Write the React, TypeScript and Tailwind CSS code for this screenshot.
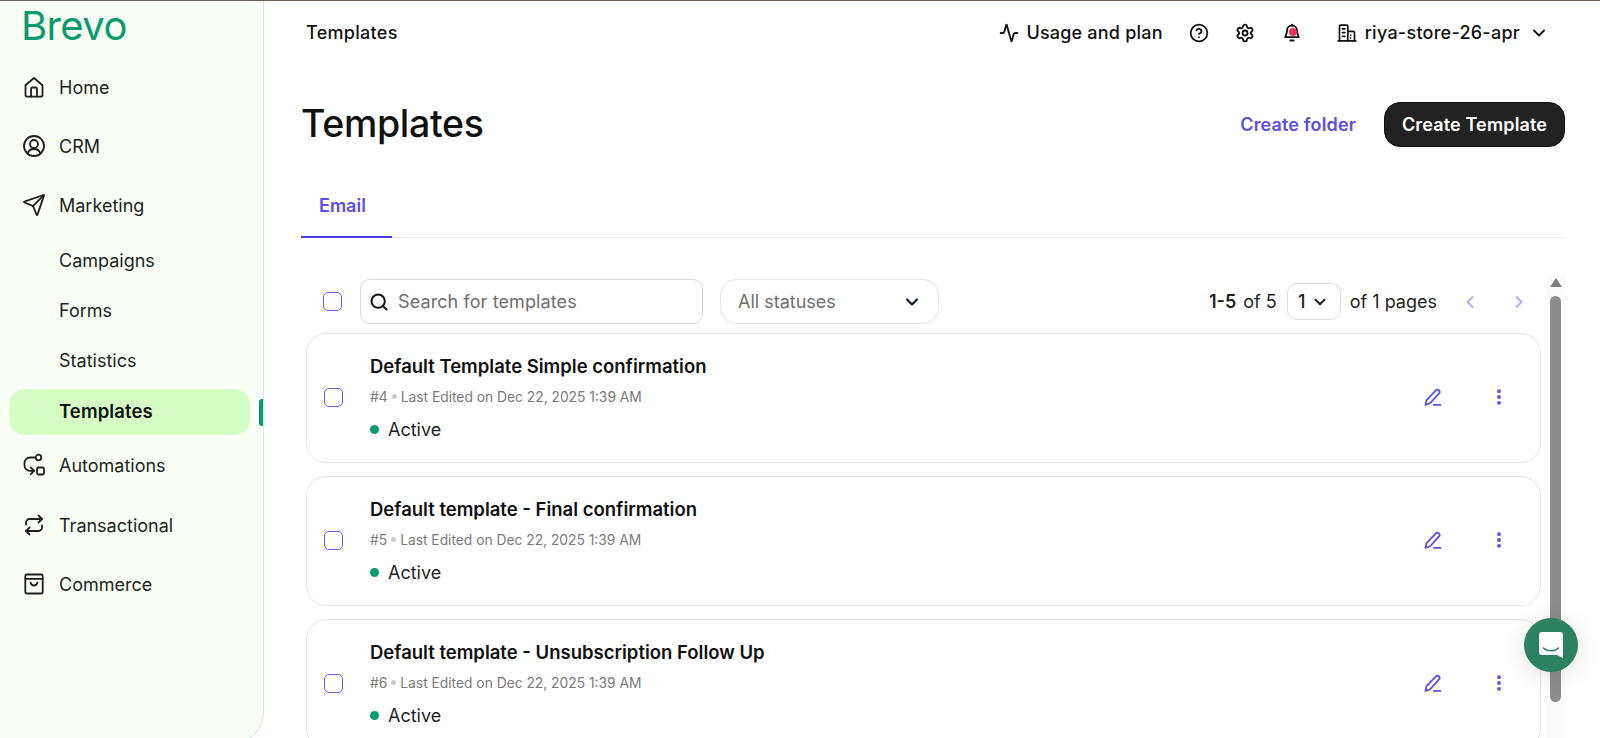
import React from "react";
import { Activity, ChevronDown, ChevronLeft, ChevronRight, CircleHelp, EllipsisVertical, Search, Send, Settings } from "lucide-react";

const Ic = ({ children, size = 24, sw = 1.8 }: { children: React.ReactNode; size?: number; sw?: number }) => (
  <svg width={size} height={size} viewBox="0 0 24 24" fill="none" stroke="currentColor" strokeWidth={sw} strokeLinecap="round" strokeLinejoin="round" className="shrink-0">
    {children}
  </svg>
);

const HomeIcon = () => (
  <Ic>
    <path d="M3.5 10.2 12 3l8.5 7.2V20a1.6 1.6 0 0 1-1.6 1.6H5.1A1.6 1.6 0 0 1 3.5 20Z" />
    <path d="M9 21.5V14a1.5 1.5 0 0 1 1.5-1.5h3A1.5 1.5 0 0 1 15 14v7.5" />
  </Ic>
);
const CrmIcon = () => (
  <Ic>
    <circle cx="12" cy="12" r="10" />
    <circle cx="12" cy="10" r="4" />
    <path d="M5.5 19.5C6.5 16.5 9 15 12 15s5.500 1.500 6.500 4.500" />
  </Ic>
);
const AutoIcon = () => (
  <Ic>
    <circle cx="16.500" cy="4.500" r="2.800" />
    <rect x="15" y="14.500" width="7" height="7" rx="1.500" />
    <path d="M12.500 4.500H8A5.500 5.500 0 0 0 2.500 10v2A5.500 5.500 0 0 0 8 17.800h4" />
    <path d="m8.800 14.500 3.400 3.300-3.400 3.400" />
  </Ic>
);
const TransIcon = () => (
  <Ic>
    <path d="M4 11.500V9.500A3.500 3.500 0 0 1 7.500 6H20" />
    <path d="m16.500 2.500 3.500 3.500-3.500 3.500" />
    <path d="M20 12.500v2a3.500 3.500 0 0 1-3.500 3.500H4" />
    <path d="m7.500 14.500-3.500 3.500 3.500 3.500" />
  </Ic>
);
const BagIcon = () => (
  <Ic>
    <path d="M4.800 2.500h14.400a1.500 1.500 0 0 1 1.500 1.500v16a1.500 1.500 0 0 1-1.500 1.500H4.800A1.500 1.500 0 0 1 3.300 20V4a1.500 1.500 0 0 1 1.500-1.500Z" />
    <path d="M3.500 6.800h17" />
    <path d="M8.500 10.500c.5 2 1.700 3 3.500 3s3-1 3.500-3" />
  </Ic>
);
const PenIcon = () => (
  <Ic size={20} sw={2.200}>
    <path d="M3 21.500 4.200 15.800 15.500 4a2.600 2.600 0 0 1 3.700 3.700L8.500 19.500 3 21.500Z" />
    <path d="M13 21.500h8" />
  </Ic>
);
const BuildingIcon = () => (
  <Ic size={20} sw={2}>
    <path d="M3 21.500V4a1.500 1.500 0 0 1 1.500-1.500h7A1.500 1.500 0 0 1 13 4v17.500" />
    <path d="M13 10h6.500A1.500 1.500 0 0 1 21 11.500v10" />
    <path d="M1.500 21.500h21M6.500 7h3M6.500 11.500h3M6.500 16h3M16.500 14.500v.01M16.500 18v.01" />
  </Ic>
);

const NavItem = ({ icon, label, h = "h-[59.500px]" }: { icon: React.ReactNode; label: string; h?: string }) => (
  <div className={`flex ${h} items-center gap-[13px] pl-[22px] text-[18px] text-[#1f1f1f]`}>
    {icon}
    <span className="mt-[1px]">{label}</span>
  </div>
);

const SubItem = ({ label }: { label: string }) => (
  <div className="flex h-[50px] items-center pl-[59px] text-[18px] text-[#1f1f1f]">{label}</div>
);

const Card = ({ title, id }: { title: string; id: string }) => (
  <div className="flex h-[130px] w-[1235px] shrink-0 items-center rounded-[20px] border border-[#e5e5e5] bg-white">
    <div className="mb-[2px] ml-[17px] h-[19px] w-[19px] shrink-0 rounded-[5px] border border-[#6a5ef0]" />
    <div className="mb-[1px] ml-[27px] flex flex-col">
      <div className="text-[18.500px] leading-[24px] font-semibold text-[#111]">{title}</div>
      <div className="mt-[9px] flex items-center text-[13.800px] leading-[20px] text-[#7a7a7a]">
        <span>#{id}</span>
        <span className="mx-[4px] h-[5px] w-[5px] rounded-full bg-[#c9c9c9]" />
        <span>Last Edited on Dec 22, 2025 1:39 AM</span>
      </div>
      <div className="mt-[11px] flex items-center text-[18px] leading-[24px] text-[#1f1f1f]">
        <span className="mr-[9px] h-[9px] w-[9px] rounded-full bg-[#0b996e]" />
        Active
      </div>
    </div>
    <div className="mb-[2px] ml-auto mr-[31px] flex items-center gap-[46px] text-[#5b4ee8]">
      <PenIcon />
      <EllipsisVertical size={20} strokeWidth={2.600} />
    </div>
  </div>
);

export default function App() {
  return (
    <div className="relative flex h-[738px] w-[1600px] flex-col overflow-hidden bg-white font-['Inter',sans-serif]">
      <div className="h-[1px] shrink-0 bg-[#6d5f59]" />
      <div className="flex min-h-0 flex-1">
        <aside className="h-[743px] w-[264px] shrink-0 rounded-br-[32px] border-r border-b border-[#d5ebe3] bg-[#f9fff6]">
          <div className="h-[56px] pl-[21px] text-[40px] leading-[50px] tracking-[-0.600px] text-[#0b996e]">Brevo</div>
          <NavItem h="h-[59px]" icon={<HomeIcon />} label="Home" />
          <NavItem h="h-[59px]" icon={<CrmIcon />} label="CRM" />
          <NavItem h="h-[59px]" icon={<Send size={24} strokeWidth={1.800} />} label="Marketing" />
          <div className="mt-[1.500px]">
            <SubItem label="Campaigns" />
            <SubItem label="Forms" />
            <SubItem label="Statistics" />
          </div>
          <div className="relative mt-[3px] ml-[9px] flex h-[46px] w-[241px] items-center rounded-[16px] bg-[#d6fdc6] pl-[50px] text-[18.500px] font-semibold tracking-[0.100px] text-[#111]">
            Templates
            <span className="absolute right-[-13px] top-[10px] h-[27px] w-[4px] rounded-l-[3px] bg-[#0b996e]" />
          </div>
          <div className="mt-[1px]">
            <NavItem icon={<AutoIcon />} label="Automations" />
            <NavItem icon={<TransIcon />} label="Transactional" />
            <NavItem icon={<BagIcon />} label="Commerce" />
          </div>
        </aside>

        <main className="flex min-w-0 flex-1 flex-col pl-[37px] pr-[35px]">
          <header className="flex h-[63px] shrink-0 items-center pl-[5px] text-[18px] font-medium text-[#111]">
            <span className="tracking-[0.300px]">Templates</span>
            <div className="ml-auto flex items-center pr-[16px]">
              <Activity size={20} strokeWidth={2.200} />
              <span className="ml-[7px] tracking-[0.200px]">Usage and plan</span>
              <span className="ml-[26px]"><CircleHelp size={20} strokeWidth={2.200} /></span>
              <span className="ml-[26px]"><Settings size={20} strokeWidth={2.200} /></span>
              <span className="relative ml-[27px] mr-[35px]">
                <svg width="20" height="20" viewBox="0 0 24 24" fill="none" stroke="currentColor" strokeWidth="2.200" strokeLinecap="round" strokeLinejoin="round">
                  <path d="M6 9a6 6 0 0 1 12 0c0 5 2 6.500 2 8H4c0-1.500 2-3 2-8Z" />
                  <path d="M10 21h4M12 3V2" />
                </svg>
                <span className="absolute left-[7px] top-[5px] h-[8px] w-[8px] rounded-full bg-[#f0304f]" />
              </span>
              <BuildingIcon />
              <span className="ml-[8px] tracking-[0.250px]">riya-store-26-apr</span>
              <span className="ml-[9px]"><ChevronDown size={20} strokeWidth={2.200} /></span>
            </div>
          </header>

          <div className="mt-[22px] flex h-[76px] shrink-0 items-center justify-between">
            <h1 className="text-[37.500px] font-medium tracking-[-0.300px] text-[#111]">Templates</h1>
            <div className="flex items-center gap-[28px] tracking-[0.150px]">
              <span className="text-[18px] font-semibold text-[#5b4ee8]">Create folder</span>
              <button className="h-[45px] w-[181px] rounded-[16px] border border-[#111] bg-[#222] text-[18px] font-semibold text-white">Create Template</button>
            </div>
          </div>

          <div className="mt-[32px] flex h-[44px] shrink-0 border-b border-[#ececec]">
            <div className="h-[44px] w-[91px] border-b-[2px] border-[#4a3ee8] pl-[18px] text-[18px] leading-[24px] font-semibold text-[#5b4ee8]">Email</div>
          </div>

          <div className="mt-[35px] flex min-h-0 flex-1">
            <div className="flex min-w-0 flex-1 flex-col">
              <div className="mt-[6px] flex h-[45px] w-[1240px] shrink-0 items-center">
                <div className="ml-[22px] h-[19px] w-[19px] rounded-[5px] border border-[#6a5ef0]" />
                <div className="ml-[18px] flex h-[45px] w-[343px] items-center rounded-[10px] border border-[#d9d9d9] pl-[8px] text-[18px] tracking-[0.100px] text-[#6f6f6f]">
                  <Search size={20} strokeWidth={2.400} className="text-[#111]" />
                  <span className="ml-[9px]">Search for templates</span>
                </div>
                <div className="ml-[17px] flex h-[45px] w-[219px] items-center justify-between rounded-[16px] border border-[#e5e5e5] pl-[17px] pr-[16px] text-[18px] text-[#6f6f6f]">
                  <span>All statuses</span>
                  <ChevronDown size={20} strokeWidth={2.600} className="text-[#111827]" />
                </div>
                <div className="ml-auto flex items-center text-[18px] text-[#1f1f1f]">
                  <span className="font-semibold">1-5</span>
                  <span className="ml-[7px]">of 5</span>
                  <div className="ml-[10px] flex h-[37px] w-[54px] items-center justify-center gap-[6px] rounded-[10px] border border-[#dcdcdc] font-medium">
                    1<ChevronDown size={18} strokeWidth={2.600} />
                  </div>
                  <span className="ml-[9px]">of 1 pages</span>
                  <ChevronLeft size={20} strokeWidth={2.400} className="ml-[23px] text-[#b3adf5]" />
                  <ChevronRight size={20} strokeWidth={2.400} className="ml-[29px] mr-[12px] text-[#b3adf5]" />
                </div>
              </div>
              <div className="ml-[5px] mt-[9px] flex flex-col gap-[13px]">
                <Card title="Default Template Simple confirmation" id="4" />
                <Card title="Default template - Final confirmation" id="5" />
                <Card title="Default template - Unsubscription Follow Up" id="6" />
              </div>
            </div>
          </div>
        </main>
      </div>

      <div className="absolute left-[1546px] top-[275px] flex h-[463px] w-[19px] flex-col items-center bg-[#fbfbfb]">
        <div className="mt-[3px] h-0 w-0 border-x-[6px] border-b-[9px] border-x-transparent border-b-[#7f7f7f]" />
        <div className="mt-[9px] h-[406px] w-[11px] rounded-full bg-[#8c8c8c]" />
      </div>

      <div className="absolute left-[1524px] top-[618px] flex h-[54px] w-[54px] items-center justify-center rounded-full bg-[#2b8160] shadow-[0_4px_24px_rgba(0,0,0,0.12)]">
        <svg width="26" height="28" viewBox="0 0 26 28">
          <path d="M4 1h18a3 3 0 0 1 3 3v23l-6-3H4a3 3 0 0 1-3-3V4a3 3 0 0 1 3-3Z" fill="#fff" />
          <path d="M5.500 17c2 2 4.500 2.800 7.500 2.800s5.500-.8 7.500-2.800" fill="none" stroke="#2b8160" strokeWidth="1.400" strokeLinecap="round" />
        </svg>
      </div>
    </div>
  );
}
